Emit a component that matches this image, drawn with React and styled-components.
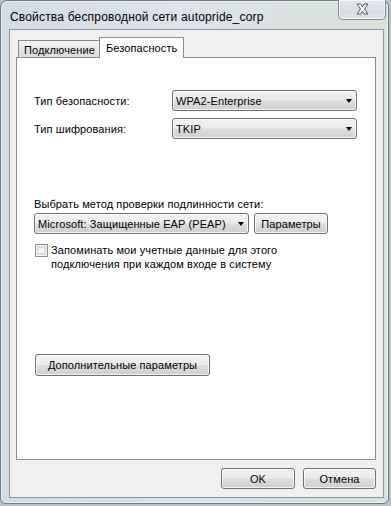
import React from 'react';
import styled, { createGlobalStyle } from 'styled-components';

const Global = createGlobalStyle`
  html, body { margin: 0; padding: 0; background: #b7c1c7; }
  body {
    width: 391px; height: 506px; overflow: hidden;
    font-family: "Liberation Sans", Arial, sans-serif;
    font-size: 11px; color: #000;
    letter-spacing: 0.1px;
  }
  * { box-sizing: border-box; }
`;

const Window = styled.div`
  width: 389px;
  height: 504px;
  border: 1px solid #6c7884;
  border-radius: 7px 7px 6px 6px;
  background: linear-gradient(to right, #d3dbe3 0%, #dde3e9 45%, #d9e2da 100%);
  box-shadow: inset 0 0 0 1px rgba(255, 255, 255, 0.55);
  display: flex;
  flex-direction: column;
  padding: 0 4px 5px 8px;
`;

const TitleBar = styled.div`
  height: 28px;
  display: flex;
  justify-content: space-between;
  align-items: flex-start;
`;

const Title = styled.div`
  padding: 9px 0 0 1px;
  font-size: 12px;
  line-height: 14px;
  letter-spacing: 0.18px;
  color: #000;
  white-space: nowrap;
`;

const CloseButton = styled.div`
  width: 48px;
  height: 20px;
  margin: -1px -2px 0 0;
  border: 1px solid #7f8a95;
  border-top: none;
  border-radius: 0 0 5px 5px;
  background: linear-gradient(#e4e9ee, #d6dde4 60%, #dfe5ea);
  box-shadow: inset 0 0 0 1px rgba(255, 255, 255, 0.6);
  display: flex;
  align-items: center;
  justify-content: center;
  padding-bottom: 1px;
`;

const Client = styled.div`
  flex: 1;
  border: 1px solid #8a95a1;
  background: #f0f0f0;
  display: flex;
  flex-direction: column;
  padding: 7px 7px 8px 6px;
`;

const TabStrip = styled.div`
  height: 20px;
  display: flex;
  align-items: flex-start;
  padding-left: 2px;
  position: relative;
  z-index: 1;
`;

const Tab = styled.div`
  height: ${p => (p.$active ? 21 : 17)}px;
  margin-top: ${p => (p.$active ? 0 : 3)}px;
  width: ${p => p.$w}px;
  border: 1px solid #898c95;
  border-bottom: none;
  ${p => (p.$active ? '' : 'border-right: none;')}
  background: ${p => (p.$active ? '#ffffff' : 'linear-gradient(#f4f4f4, #e6e6e6 50%, #dcdcdc)')};
  padding: ${p => (p.$active ? '3px 0 0 6px' : '2px 0 0 5px')};
  line-height: 14px;
  white-space: nowrap;
`;

const Panel = styled.div`
  flex: 1;
  border: 1px solid #898c95;
  background: #ffffff;
  padding: 32px 0 0 17px;
  display: flex;
  flex-direction: column;
`;

const Grid = styled.div`
  display: grid;
  grid-template-columns: 138px 185px;
  row-gap: 7px;
  align-items: center;
`;

const Label = styled.div`
  line-height: 14px;
  white-space: nowrap;
  margin-top: ${p => p.$mt || 0}px;
`;

const Combo = styled.div`
  width: ${p => p.$w}px;
  height: 21px;
  border: 1px solid #707070;
  border-radius: 3px;
  background: linear-gradient(#f2f2f2 0%, #ebebeb 48%, #dddddd 52%, #cfcfcf 100%);
  box-shadow: inset 0 0 0 1px rgba(255, 255, 255, 0.75);
  display: flex;
  align-items: center;
  padding: 0 4px 0 3px;
  white-space: nowrap;
`;

const ComboText = styled.span`
  flex: 1;
`;

const Arrow = styled.span`
  width: 0;
  height: 0;
  border-left: 3.5px solid transparent;
  border-right: 3.5px solid transparent;
  border-top: 4px solid #000;
`;

const Button = styled.div`
  width: ${p => p.$w}px;
  height: ${p => p.$h || 21}px;
  margin-left: ${p => p.$ml || 0}px;
  margin-top: ${p => p.$mt || 0}px;
  border: 1px solid #707070;
  border-radius: 3px;
  background: linear-gradient(#f2f2f2 0%, #ebebeb 48%, #dddddd 52%, #cfcfcf 100%);
  box-shadow: inset 0 0 0 1px rgba(255, 255, 255, 0.75);
  display: flex;
  align-items: center;
  justify-content: center;
  white-space: nowrap;
`;

const AuthRow = styled.div`
  display: flex;
  gap: 5px;
  margin-top: 2px;
`;

const CheckRow = styled.div`
  display: flex;
  align-items: flex-start;
  gap: 3px;
  margin-top: 10px;
  padding-left: 1px;
`;

const Checkbox = styled.div`
  width: 13px;
  height: 13px;
  flex: none;
  border: 1px solid #8e8f8f;
  background: #f4f4f4;
  box-shadow: inset 0 0 0 1px #f4f4f4, inset 0 0 0 3px #dcdcdc;
`;

const CheckText = styled.div`
  line-height: 14px;
  margin-top: -1px;
`;

const Footer = styled.div`
  display: flex;
  justify-content: flex-end;
  gap: 8px;
  margin-top: 8px;
`;

const CloseGlyph = () => (
  <svg width="13" height="12" viewBox="0 0 13 12">
    <path
      d="M1 1 H4.6 L6.5 3.6 L8.4 1 H12 L8.6 6 L12 11 H8.4 L6.5 8.4 L4.6 11 H1 L4.4 6 Z"
      fill="#f7f8f9"
      stroke="#4b5660"
      strokeWidth="1"
      strokeLinejoin="round"
    />
  </svg>
);

export default function App() {
  return (
    <>
      <Global />
      <Window>
        <TitleBar>
          <Title>Свойства беспроводной сети autopride_corp</Title>
          <CloseButton>
            <CloseGlyph />
          </CloseButton>
        </TitleBar>
        <Client>
          <TabStrip>
            <Tab $w={81}>Подключение</Tab>
            <Tab $active $w={85}>Безопасность</Tab>
          </TabStrip>
          <Panel>
            <Grid>
              <Label>Тип безопасности:</Label>
              <Combo $w={185}>
                <ComboText>WPA2-Enterprise</ComboText>
                <Arrow />
              </Combo>
              <Label>Тип шифрования:</Label>
              <Combo $w={185}>
                <ComboText>TKIP</ComboText>
                <Arrow />
              </Combo>
            </Grid>
            <Label $mt={58}>Выбрать метод проверки подлинности сети:</Label>
            <AuthRow>
              <Combo $w={215}>
                <ComboText>Microsoft: Защищенные EAP (PEAP)</ComboText>
                <Arrow />
              </Combo>
              <Button $w={74}>Параметры</Button>
            </AuthRow>
            <CheckRow>
              <Checkbox />
              <CheckText>
                Запоминать мои учетные данные для этого
                <br />
                подключения при каждом входе в систему
              </CheckText>
            </CheckRow>
            <Button $w={175} $h={22} $ml={1} $mt={83}>Дополнительные параметры</Button>
          </Panel>
          <Footer>
            <Button $w={74}>OK</Button>
            <Button $w={73}>Отмена</Button>
          </Footer>
        </Client>
      </Window>
    </>
  );
}
